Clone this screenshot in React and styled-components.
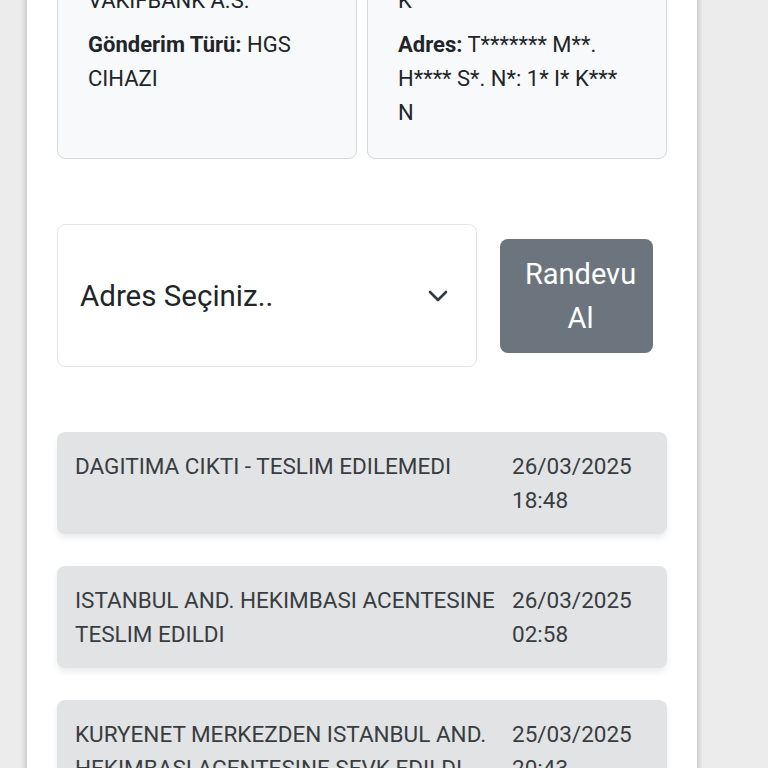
import React from "react"
import styled, { createGlobalStyle } from "styled-components"

const GlobalStyle = createGlobalStyle`
  html, body {
    margin: 0;
    padding: 0;
    background: #ececec;
    font-family: Roboto, "Noto Sans", "Liberation Sans", sans-serif;
    color: #212529;
  }
  #root {
    height: 768px;
    overflow: hidden;
  }
`

const Panel = styled.div`
  margin-left: 27px;
  width: 670px;
  min-height: 768px;
  background: #fff;
  box-shadow: -3px 0 4px rgba(0, 0, 0, 0.12), 3px 0 4px rgba(0, 0, 0, 0.12);
`

// the page is shown scrolled down a little
const Content = styled.div`
  padding: 0 30px;
  margin-top: -77px;
`

const CardRow = styled.div`
  display: grid;
  grid-template-columns: 300px 300px;
  gap: 10px;
`

const InfoCard = styled.div`
  background: #f8f9fa;
  border: 1px solid #d6d8db;
  border-radius: 8px;
  padding: 26px 29px 18px 30px;
  font-size: 22px;
  line-height: 34px;
`

const Line = styled.p`
  margin: 0 0 10px;
`

const Label = styled.b`
  font-weight: 700;
`

const ActionRow = styled.div`
  display: flex;
  align-items: center;
  gap: 23px;
  margin-top: 65px;
`

const SelectBox = styled.div`
  width: 420px;
  height: 143px;
  box-sizing: border-box;
  border: 1px solid #e3e5e8;
  border-radius: 8px;
  display: flex;
  align-items: center;
  justify-content: space-between;
  padding: 0 28px 0 22px;
  font-size: 29.5px;
  color: #212529;
`

const Button = styled.button`
  width: 153px;
  height: 114px;
  border: none;
  border-radius: 8px;
  background: #6c757d;
  color: #fff;
  font-family: inherit;
  font-size: 29px;
  line-height: 44px;
  padding: 0 6px 0 14px;
`

const Timeline = styled.div`
  display: flex;
  flex-direction: column;
  gap: 32px;
  margin-top: 65px;
`

const Event = styled.div`
  display: grid;
  grid-template-columns: 437px 1fr;
  background: #e2e3e5;
  border-radius: 8px;
  padding: 17px 18px;
  font-size: 22.5px;
  line-height: 34px;
  color: #383d41;
  box-shadow: 0 4px 6px rgba(0, 0, 0, 0.08);
`

const Message = styled.div`
  text-transform: uppercase;
`

const When = styled.div``

const Chevron = () => (
  <svg width="20" height="12" viewBox="0 0 20 12" fill="none">
    <path d="M2 2l8 8 8-8" stroke="#343a40" strokeWidth="2.6" strokeLinecap="round" strokeLinejoin="round" />
  </svg>
)

const events = [
  { text: "DAGITIMA CIKTI - TESLIM EDILEMEDI", date: "26/03/2025", time: "18:48" },
  { text: "ISTANBUL AND. HEKIMBASI ACENTESINE TESLIM EDILDI", date: "26/03/2025", time: "02:58" },
  { text: "KURYENET MERKEZDEN ISTANBUL AND. HEKIMBASI ACENTESINE SEVK EDILDI", date: "25/03/2025", time: "20:43" },
]

export default function App ()
{
  return (
    <>
      <GlobalStyle />
      <Panel>
        <Content>
          <CardRow>
            <InfoCard>
              <Line><Label>Gönderici:</Label><br />VAKIFBANK A.S.</Line>
              <Line><Label>Gönderim Türü:</Label> HGS CIHAZI</Line>
            </InfoCard>
            <InfoCard>
              <Line><Label>Alıcı:</Label><br />K</Line>
              <Line><Label>Adres:</Label> T******* M**. H**** S*. N*: 1* I* K*** N</Line>
            </InfoCard>
          </CardRow>

          <ActionRow>
            <SelectBox>
              <span>Adres Seçiniz..</span>
              <Chevron />
            </SelectBox>
            <Button>Randevu Al</Button>
          </ActionRow>

          <Timeline>
            { events.map( ( e, i ) => (
              <Event key={ i }>
                <Message>{ e.text }</Message>
                <When>{ e.date }<br />{ e.time }</When>
              </Event>
            ) ) }
          </Timeline>
        </Content>
      </Panel>
    </>
  )
}
